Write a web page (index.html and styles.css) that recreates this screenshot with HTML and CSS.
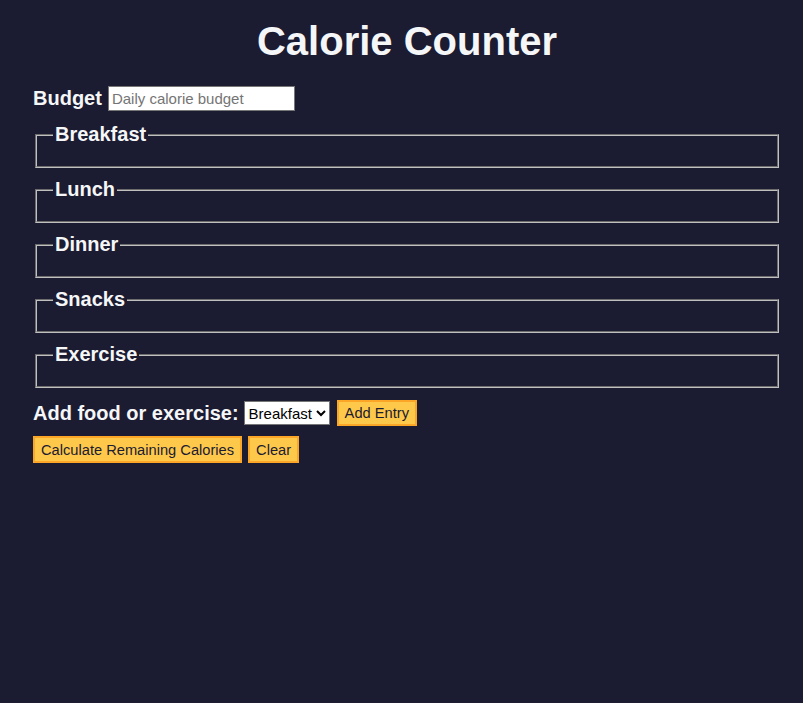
FILE: index.html
```html
<!DOCTYPE html>
<html lang="en">
<head>
<meta charset="utf-8">
<title>Calorie Counter</title>
<link rel="stylesheet" href="styles.css">
</head>
<body>
<main class="container">
  <h1 class="title">Calorie Counter</h1>
  <form class="form">
    <div class="budget-row">
      <label class="label" for="budget">Budget</label>
      <input class="budget-input" type="number" id="budget" placeholder="Daily calorie budget">
    </div>
    <fieldset class="meal"><legend class="legend">Breakfast</legend></fieldset>
    <fieldset class="meal"><legend class="legend">Lunch</legend></fieldset>
    <fieldset class="meal"><legend class="legend">Dinner</legend></fieldset>
    <fieldset class="meal"><legend class="legend">Snacks</legend></fieldset>
    <fieldset class="meal"><legend class="legend">Exercise</legend></fieldset>
    <div class="controls">
      <label class="label" for="entry-dropdown">Add food or exercise:</label>
      <select class="dropdown" id="entry-dropdown">
        <option>Breakfast</option>
        <option>Lunch</option>
        <option>Dinner</option>
        <option>Snacks</option>
        <option>Exercise</option>
      </select>
      <button class="btn btn-add" type="button">Add Entry</button>
    </div>
    <div class="actions">
      <button class="btn" type="button">Calculate Remaining Calories</button>
      <button class="btn" type="button">Clear</button>
    </div>
  </form>
</main>
</body>
</html>
```

FILE: styles.css
```css
html, body {
  margin: 0;
  padding: 0;
}
body {
  background: #1b1b32;
  color: #f5f6f7;
  font-family: "Liberation Sans", Arial, sans-serif;
  min-height: 703px;
}
.container {
  margin: 0 22px 0 33px;
  padding-top: 18px;
}
.title {
  text-align: center;
  font-size: 40px;
  line-height: 46px;
  margin: 0 0 22px;
}
.label, .legend {
  font-weight: bold;
  font-size: 20px;
}
.budget-row {
  display: flex;
  align-items: center;
  gap: 6px;
  height: 25px;
  padding-bottom: 2px;
}
.budget-input {
  box-sizing: border-box;
  width: 187px;
  height: 25px;
  font-family: "Liberation Sans", Arial, sans-serif;
  font-size: 15px;
  padding: 1px 3px;
  border: 1px solid #767676;
  background: #fff;
  color: #000;
}
.budget-input::placeholder {
  color: #757575;
}
.meal {
  margin: 10px 2px 0;
  border: 2px groove #c0c0c0;
  padding: 0 16px 20px;
  font-size: 20px;
  height: 0;
}
.legend {
  padding: 0 2px;
  line-height: 23px;
}
.controls {
  display: flex;
  align-items: center;
  margin-top: 12px;
}
.dropdown {
  box-sizing: border-box;
  height: 24px;
  font-family: "Liberation Sans", Arial, sans-serif;
  font-size: 15px;
  background: #fff;
  color: #000;
  border: 1px solid #767676;
  margin: 0 0 0 5px;
}
.btn {
  font-family: "Liberation Sans", Arial, sans-serif;
  font-size: 14.667px;
  line-height: 16px;
  padding: 3px 6px;
  background: #fec84b;
  border: 2px solid #fba627;
  color: #1b1b32;
  margin: 0;
  cursor: pointer;
}
.btn-add {
  margin-left: 7px;
}
.actions {
  display: flex;
  gap: 6px;
  margin-top: 10px;
}
.actions .btn {
  padding-top: 4px;
}
```
